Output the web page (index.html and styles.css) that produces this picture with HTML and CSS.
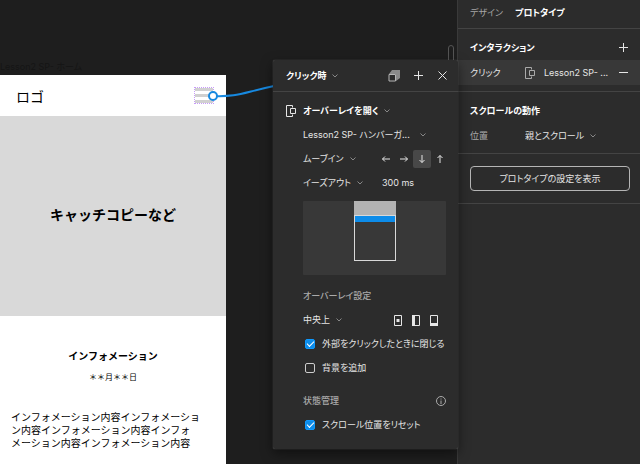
FILE: index.html
```html
<!DOCTYPE html>
<html lang="ja">
<head>
    <meta charset="UTF-8">
    <meta name="viewport" content="width=device-width, initial-scale=1.0">
    <title>プロトタイプ</title>
    <link rel="stylesheet" href="styles.css">
</head>
<body>

    <main class="canvas">
        <div class="frame-name">Lesson2 SP- ホーム</div>
        <article class="artboard">
            <header class="site-header">
                <span class="logo">ロゴ</span>
                <span class="hamburger"><i></i><i></i><i></i></span>
            </header>
            <div class="hero">
                <h1>キャッチコピーなど</h1>
            </div>
            <section class="info">
                <h2>インフォメーション</h2>
                <p class="date">＊＊月＊＊日</p>
                <p class="text">インフォメーション内容インフォメーション内容インフォメーション内容インフォメーション内容インフォメーション内容</p>
            </section>
        </article>
        <svg class="noodle" width="80" height="30" viewBox="0 0 80 30" fill="none" stroke="#1789e0">
            <path d="M12 16C39 17 41 13 74 6" stroke-width="2"/>
            <circle cx="13" cy="16" r="4" fill="#fff" stroke-width="2"/>
        </svg>
        <div class="scrollbar"></div>
    </main>

    <aside class="sidebar">
        <nav class="tabs">
            <a href="#design">デザイン</a>
            <a href="#prototype" class="active">プロトタイプ</a>
        </nav>
        <section class="side-section interactions">
            <div class="side-row">
                <h3>インタラクション</h3>
                <button class="icon-button" type="button" aria-label="追加">
                    <svg width="9" height="9" viewBox="0 0 9 9"><path d="M4.500 0v9M0 4.500h9"/></svg>
                </button>
            </div>
            <div class="side-row selected">
                <span class="trigger">クリック</span>
                <svg class="overlay-icon dim" width="10" height="12" viewBox="0 0 10 12"><path d="M6.500 2.500v-2h-6v11h6v-2M4.500 3.500h5v5h-5z"/></svg>
                <span class="target">Lesson2 SP- ...</span>
                <button class="icon-button" type="button" aria-label="削除">
                    <svg width="9" height="9" viewBox="0 0 9 9"><path d="M0 4.500h9"/></svg>
                </button>
            </div>
        </section>
        <section class="side-section scroll">
            <div class="side-row">
                <h3>スクロールの動作</h3>
            </div>
            <div class="side-row">
                <label class="trigger muted" for="position">位置</label>
                <span class="select">
                    <select id="position"><option>親とスクロール</option></select>
                    <svg width="6" height="4" viewBox="0 0 6 4"><path d="M.5.5L3 3L5.500.5"/></svg>
                </span>
            </div>
        </section>
        <section class="side-section settings">
            <button class="outline-button" type="button">プロトタイプの設定を表示</button>
        </section>
    </aside>

    <form class="popover">
        <header class="popover-header">
            <span class="select bold">
                <select aria-label="トリガー"><option>クリック時</option></select>
                <svg width="6" height="4" viewBox="0 0 6 4"><path d="M.5.5L3 3L5.500.5"/></svg>
            </span>
            <button class="icon-button" type="button" aria-label="コピー">
                <svg class="copy" width="12" height="12" viewBox="0 0 12 12"><path class="back" d="M1 4L4 0h8v8L8 11V4z"/><path class="front" d="M1 4.500h6.500V11H1z"/></svg>
            </button>
            <button class="icon-button" type="button" aria-label="追加">
                <svg width="9" height="9" viewBox="0 0 9 9"><path d="M4.500 0v9M0 4.500h9"/></svg>
            </button>
            <button class="icon-button" type="button" aria-label="閉じる">
                <svg width="9" height="9" viewBox="0 0 9 9"><path d="M.5.5l8 8M8.500.5l-8 8"/></svg>
            </button>
        </header>

        <div class="popover-body">
            <svg class="overlay-icon" width="10" height="12" viewBox="0 0 10 12"><path d="M6.500 2.500v-2h-6v11h6v-2M4.500 3.500h5v5h-5z"/></svg>
            <div class="fields">
                <div class="row">
                    <span class="select bold">
                        <select aria-label="アクション"><option>オーバーレイを開く</option></select>
                        <svg width="6" height="4" viewBox="0 0 6 4"><path d="M.5.5L3 3L5.500.5"/></svg>
                    </span>
                </div>
                <div class="row">
                    <span class="select wide">
                        <select aria-label="移動先"><option>Lesson2 SP- ハンバーガ...</option></select>
                        <svg width="6" height="4" viewBox="0 0 6 4"><path d="M.5.5L3 3L5.500.5"/></svg>
                    </span>
                </div>
                <div class="row split">
                    <span class="select">
                        <select aria-label="アニメーション"><option>ムーブイン</option></select>
                        <svg width="6" height="4" viewBox="0 0 6 4"><path d="M.5.5L3 3L5.500.5"/></svg>
                    </span>
                    <div class="directions">
                        <button type="button" aria-label="左"><svg width="8" height="8" viewBox="0 0 8 8"><path d="M8 4H.5M3 1.500L.5 4L3 6.500"/></svg></button>
                        <button type="button" aria-label="右"><svg width="8" height="8" viewBox="0 0 8 8"><path d="M0 4h7.500M5 1.500L7.500 4L5 6.500"/></svg></button>
                        <button type="button" aria-label="下" class="active"><svg width="8" height="8" viewBox="0 0 8 8"><path d="M4 0v7.500M1.500 5L4 7.500L6.500 5"/></svg></button>
                        <button type="button" aria-label="上"><svg width="8" height="8" viewBox="0 0 8 8"><path d="M4 8V.5M1.500 3L4 .5L6.500 3"/></svg></button>
                    </div>
                </div>
                <div class="row split">
                    <span class="select">
                        <select aria-label="イージング"><option>イーズアウト</option></select>
                        <svg width="6" height="4" viewBox="0 0 6 4"><path d="M.5.5L3 3L5.500.5"/></svg>
                    </span>
                    <input class="duration" type="text" value="300 ms" aria-label="時間">
                </div>

                <div class="preview">
                    <div class="preview-overlay"></div>
                    <div class="preview-screen"></div>
                </div>

                <div class="row">
                    <h4>オーバーレイ設定</h4>
                </div>
                <div class="row">
                    <span class="select">
                        <select aria-label="オーバーレイの位置"><option>中央上</option></select>
                        <svg width="6" height="4" viewBox="0 0 6 4"><path d="M.5.5L3 3L5.500.5"/></svg>
                    </span>
                    <div class="anchors">
                        <button type="button" aria-label="中央"><svg width="8" height="11" viewBox="0 0 8 11"><path d="M.5.5h7v10h-7z"/><path class="fill" d="M2.500 4h3v3h-3z"/></svg></button>
                        <button type="button" aria-label="左"><svg width="8" height="11" viewBox="0 0 8 11"><path d="M.5.5h7v10h-7z"/><path class="fill" d="M0 0h3v11H0z"/></svg></button>
                        <button type="button" aria-label="下"><svg width="8" height="11" viewBox="0 0 8 11"><path d="M.5.5h7v10h-7z"/><path class="fill" d="M0 8h8v3H0z"/></svg></button>
                    </div>
                </div>
                <div class="row check">
                    <input type="checkbox" id="close-outside" checked>
                    <label for="close-outside">外部をクリックしたときに閉じる</label>
                </div>
                <div class="row check">
                    <input type="checkbox" id="add-background">
                    <label for="add-background">背景を追加</label>
                </div>

                <div class="row state">
                    <h4>状態管理</h4>
                    <button class="icon-button" type="button" aria-label="情報">
                        <svg class="dim" width="10" height="10" viewBox="0 0 10 10"><circle cx="5" cy="5" r="4.500"/><path d="M5 4.500V8M5 2.500v1"/></svg>
                    </button>
                </div>
                <div class="row check">
                    <input type="checkbox" id="reset-scroll" checked>
                    <label for="reset-scroll">スクロール位置をリセット</label>
                </div>
            </div>
        </div>
    </form>

</body>
</html>
```
FILE: styles.css
```css
* {
    box-sizing: border-box;
}

body {
    margin: 0;
    display: grid;
    grid-template-columns: 1fr 183px;
    height: 100vh;
    position: relative;
    overflow: hidden;
    background: #1e1e1e;
    color: #e6e6e6;
    font-family: Inter, "Noto Sans CJK JP", sans-serif;
    font-size: 9px;
    line-height: 16px;
    font-feature-settings: "palt";
}

h1, h2, h3, h4, p {
    margin: 0;
}

button, select, input {
    font: inherit;
    font-feature-settings: inherit;
    color: inherit;
    margin: 0;
    padding: 0;
    border: 0;
    background: none;
}

svg {
    display: block;
    flex: none;
}

button svg, .select svg, .overlay-icon {
    fill: none;
    stroke: #e6e6e6;
}

svg.dim {
    stroke: #aaa;
}

svg .fill {
    fill: #e6e6e6;
    stroke: none;
}

.copy .back {
    fill: #8a8a8a;
    stroke: none;
}

.copy .front {
    fill: #2c2c2c;
    stroke: #b5b5b5;
}

/* canvas */
.canvas {
    position: relative;
    min-width: 0;
    overflow: hidden;
    display: flex;
    flex-direction: column;
    padding-top: 59px;
}

.frame-name {
    color: #151515;
}

.artboard {
    flex: 1;
    width: 226px;
    background: #fff;
    color: #000;
    font-family: "Noto Sans CJK JP", sans-serif;
    font-size: 10px;
    font-feature-settings: normal;
}

.site-header {
    display: flex;
    align-items: center;
    justify-content: space-between;
    height: 41px;
    padding: 0 12px 0 16px;
}

.logo {
    font-size: 14px;
}

.hamburger {
    display: flex;
    flex-direction: column;
    justify-content: space-between;
    width: 20px;
    height: 17px;
    border: 1px dotted #c79bf8;
}

.hamburger i {
    height: 3px;
    background: #d0d0d0;
}

.hero {
    display: flex;
    align-items: center;
    justify-content: center;
    height: 200px;
    padding-bottom: 5px;
    background: #d9d9d9;
}

.hero h1 {
    font-size: 14px;
}

.info {
    padding: 32px 0 0;
    text-align: center;
}

.info h2 {
    font-size: 10px;
}

.date {
    margin-top: 5px;
    font-size: 8px;
}

.text {
    margin-top: 25px;
    padding: 0 20px 0 11px;
    text-align: left;
    line-height: 13px;
    line-break: strict;
}

.noodle {
    position: absolute;
    left: 200px;
    top: 80px;
}

.scrollbar {
    position: absolute;
    right: 3px;
    top: 45px;
    width: 6px;
    height: 120px;
    border: 1px solid #555;
    border-radius: 3px;
}

/* sidebar */
.sidebar {
    background: #2c2c2c;
    border-left: 1px solid #3a3a3a;
}

.tabs {
    display: flex;
    gap: 12px;
    height: 29px;
    padding: 5px 12px 0;
    border-bottom: 1px solid #444;
}

.tabs a {
    color: #a6a6a6;
    text-decoration: none;
}

.tabs .active {
    color: #fff;
    font-weight: bold;
}

.side-section {
    border-bottom: 1px solid #444;
}

.interactions {
    padding: 6px 0;
}

.side-row {
    display: flex;
    align-items: center;
    height: 25px;
    padding: 0 5px 0 12px;
}

.side-row h3 {
    flex: 1;
    font-size: 9px;
    color: #fff;
}

.side-row.selected {
    background: #383838;
}

.trigger {
    width: 55px;
}

.muted {
    color: #aaa;
}

.target {
    flex: 1;
    margin-left: 9px;
    white-space: nowrap;
}

.scroll {
    padding: 6px 0 5px;
}

.settings {
    padding: 12px 10px 12px 12px;
}

.outline-button {
    display: block;
    width: 100%;
    height: 25px;
    border: 1px solid #b5b5b5;
    border-radius: 4px;
}

.icon-button {
    display: flex;
    align-items: center;
    justify-content: center;
    width: 24px;
    height: 24px;
}

.select {
    display: flex;
    align-items: center;
    gap: 5px;
}

.select select {
    appearance: none;
    height: 16px;
}

.select svg {
    stroke: #888;
}

.select.bold {
    color: #fff;
    font-weight: bold;
}

/* interaction details */
.popover {
    position: absolute;
    top: 60px;
    right: 182px;
    width: 185px;
    background: #2c2c2c;
    border-radius: 2px;
    box-shadow: 0 0 1px #777, 0 4px 12px rgba(0, 0, 0, 0.5);
}

.popover-header {
    display: flex;
    align-items: center;
    height: 32px;
    padding: 0 4px 0 13px;
    border-bottom: 1px solid #444;
}

.popover-header .select {
    flex: 1;
}

.popover-body {
    display: grid;
    grid-template-columns: 17px minmax(0, 1fr);
    padding: 7px 8px 12px 13px;
}

.popover-body .overlay-icon {
    margin-top: 6px;
}

.row {
    display: flex;
    align-items: center;
    justify-content: space-between;
    height: 24px;
}

.row h4 {
    font-size: 9px;
    font-weight: 500;
    color: #aaa;
}

.select.wide {
    gap: 10px;
}

.row.split {
    display: grid;
    grid-template-columns: 74px 1fr;
}

.directions, .anchors {
    display: flex;
}

.directions button, .anchors button {
    display: flex;
    align-items: center;
    justify-content: center;
    width: 18px;
    height: 18px;
}

.directions .active {
    background: #484848;
    border-radius: 2px;
}

.anchors {
    margin-right: 7px;
}

.duration {
    width: 100%;
    padding-left: 5px;
}

.preview {
    display: flex;
    flex-direction: column;
    align-items: center;
    height: 74px;
    margin: 6px 4px 9px 0;
    background: #383838;
    border-radius: 1px;
}

.preview-overlay {
    width: 42px;
    height: 14px;
    background: #b3b3b3;
}

.preview-screen {
    width: 42px;
    height: 46px;
    border: 1px solid #d9d9d9;
    background: linear-gradient(#0d8ce9 6px, transparent 6px);
}

.row.check {
    justify-content: flex-start;
    gap: 7px;
    padding-left: 2px;
    white-space: nowrap;
}

.check input {
    appearance: none;
    width: 10px;
    height: 10px;
    border: 1px solid #ccc;
    border-radius: 2px;
}

.check input:checked {
    display: grid;
    place-items: center;
    border-color: #0d99ff;
    background: #0d8ce9;
}

.check input:checked::before {
    content: "";
    width: 6px;
    height: 3px;
    margin-bottom: 2px;
    border: solid #fff;
    border-width: 0 0 1px 1px;
    transform: rotate(-45deg);
}

.row.state {
    margin-top: 9px;
}

.state .icon-button {
    width: 18px;
}
```
